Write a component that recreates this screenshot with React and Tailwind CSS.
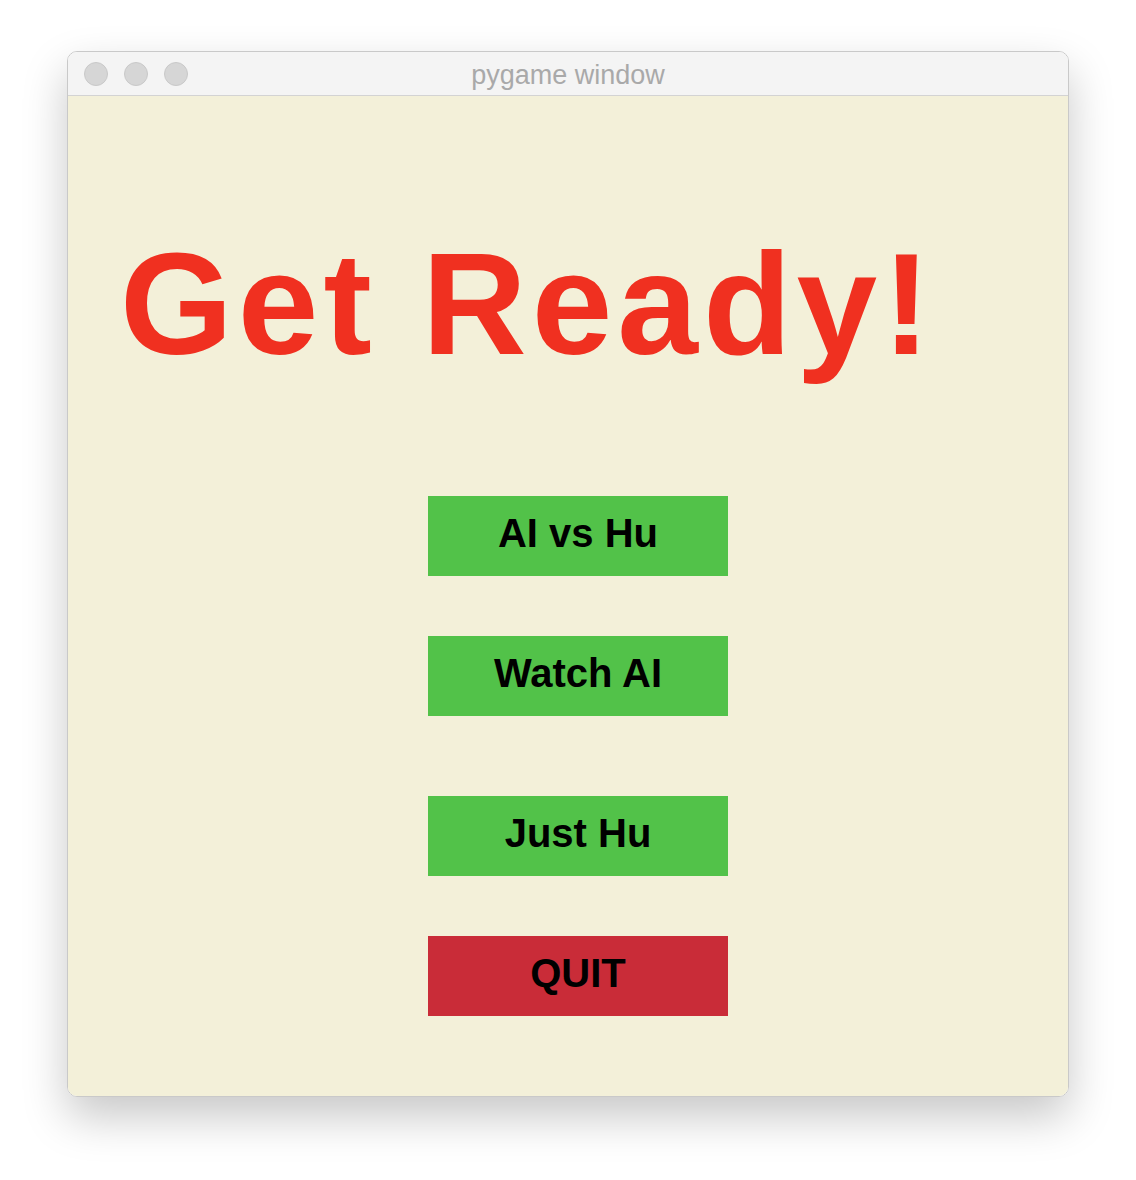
import React from "react";

const buttons = [
    { label: "AI vs Hu", color: "bg-[#52c249]", mt: "mt-0" },
    { label: "Watch AI", color: "bg-[#52c249]", mt: "mt-[60px]" },
    { label: "Just Hu", color: "bg-[#52c249]", mt: "mt-[80px]" },
    { label: "QUIT", color: "bg-[#c92c38]", mt: "mt-[60px]" },
];

const App = () => {
    return (
        <div className="min-h-[1180px] bg-white pt-[51px] pl-[67px]">
            <div className="w-[1002px] rounded-[10px] border border-[#c9c9c9] overflow-hidden shadow-[0_20px_45px_rgba(0,0,0,0.22)]">
                {/* title bar */}
                <div className="relative h-[44px] bg-[#f4f4f4] border-b border-[#d3d3d3] flex items-center">
                    <div className="flex gap-[16px] pl-[16px]">
                        <span className="w-[24px] h-[24px] rounded-full bg-[#d6d6d6] border border-[#c9c9c9]" />
                        <span className="w-[24px] h-[24px] rounded-full bg-[#d6d6d6] border border-[#c9c9c9]" />
                        <span className="w-[24px] h-[24px] rounded-full bg-[#d6d6d6] border border-[#c9c9c9]" />
                    </div>
                    <div className="absolute inset-0 pt-[3px] flex items-center justify-center text-[27px] text-[#a9a9a9] font-['Liberation_Sans',sans-serif]">
                        pygame window
                    </div>
                </div>

                {/* content */}
                <div className="h-[1000px] bg-[#f3f0d9] font-['Liberation_Sans',Arial,sans-serif]">
                    <h1 className="pt-[133px] pl-[52px] text-[145px] leading-[150px] font-bold text-[#f03020] tracking-[5px]">
                        Get Ready!
                    </h1>
                    <div className="mt-[117px] flex flex-col ml-[360px]">
                        {buttons.map((b) => (
                            <button
                                key={b.label}
                                className={`${b.mt} ${b.color} w-[300px] h-[80px] pb-[7px] flex items-center justify-center text-[40px] font-bold text-black`}
                            >
                                {b.label}
                            </button>
                        ))}
                    </div>
                </div>
            </div>
        </div>
    );
};

export default App;
